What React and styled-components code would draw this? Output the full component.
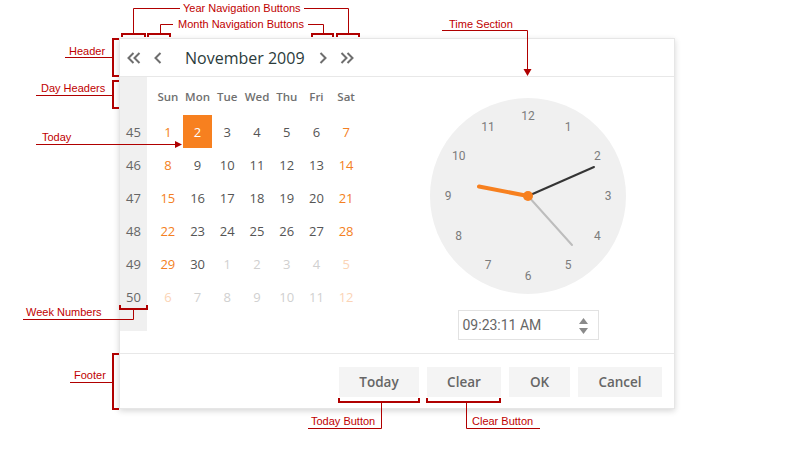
import React from "react";
import styled, { createGlobalStyle } from "styled-components";

const Global = createGlobalStyle`
  html, body { margin: 0; padding: 0; background: #ffffff; }
  body { font-family: "Open Sans", "Noto Sans", sans-serif; }
  * { box-sizing: border-box; }
`;

const Page = styled.div`
  position: relative;
  width: 794px;
  height: 450px;
  padding: 38px 0 0 119px;
  overflow: hidden;
`;

const Panel = styled.div`
  width: 556px;
  height: 371px;
  border: 1px solid #e6e6e6;
  background: #fff;
  box-shadow: 0 2px 6px rgba(0, 0, 0, 0.16);
  display: flex;
  flex-direction: column;
`;

const Header = styled.div`
  height: 38px;
  flex: none;
  border-bottom: 1px solid #e8e8e8;
  display: flex;
  align-items: center;
  padding-left: 2px;
`;

const NavButton = styled.button`
  width: 24px;
  height: 24px;
  padding: 0;
  border: 0;
  background: transparent;
  display: flex;
  align-items: center;
  justify-content: center;
  color: #6e6e6e;
`;

const Title = styled.div`
  font-family: "Open Sans", sans-serif;
  font-size: 16px;
  color: #2b3b3b;
  margin: 0 6px 0 15px;
  white-space: nowrap;
`;

const Body = styled.div`
  flex: 1;
  display: flex;
  align-items: flex-start;
`;

const WeekColumn = styled.div`
  width: 27px;
  height: 254px;
  background: #f0f0f0;
  display: flex;
  flex-direction: column;
  padding-top: 38px;
`;

const WeekNum = styled.div`
  height: 33px;
  display: flex;
  align-items: center;
  justify-content: center;
  font-size: 13px;
  color: #666;
`;

const Grid = styled.div`
  margin-left: 6px;
  width: 208px;
  display: grid;
  grid-template-columns: repeat(7, 1fr);
  grid-auto-rows: 33px;
  grid-template-rows: 38px;
`;

const DayHead = styled.div`
  display: flex;
  align-items: center;
  justify-content: center;
  font-size: 11.5px;
  font-weight: 600;
  color: #707070;
`;

const dayColor = ({ $today, $weekend, $other }) => {
  if ($today) return "#ffffff";
  if ($other) return $weekend ? "#fbd4b6" : "#d0d0d0";
  return $weekend ? "#f47f22" : "#555555";
};

const Day = styled.div`
  display: flex;
  align-items: center;
  justify-content: center;
  font-size: 13px;
  color: ${dayColor};
  background: ${({ $today }) => ($today ? "#f7801f" : "transparent")};
`;

const TimeSection = styled.div`
  flex: 1;
  display: flex;
  flex-direction: column;
  align-items: center;
  padding: 21px 0 0 21px;
`;

const TimeInput = styled.div`
  margin-top: 16px;
  width: 141px;
  height: 30px;
  border: 1px solid #e2e2e2;
  display: flex;
  align-items: center;
  justify-content: space-between;
  padding: 0 10px 0 4px;
  font-family: Roboto, sans-serif;
  font-size: 14px;
  color: #666;
`;

const Spinner = styled.div`
  display: flex;
  flex-direction: column;
  gap: 4px;
  margin-top: 1px;
`;

const Footer = styled.div`
  height: 55px;
  flex: none;
  border-top: 1px solid #e8e8e8;
  display: flex;
  justify-content: flex-end;
  align-items: flex-start;
  gap: 8px;
  padding: 13px 12px 0 0;
`;

const FooterButton = styled.button`
  width: ${({ $w }) => $w}px;
  height: 30px;
  border: 0;
  background: #f4f4f4;
  font-family: "Open Sans", sans-serif;
  font-size: 13.5px;
  font-weight: 600;
  color: #666;
  padding: 0;
`;

const Overlay = styled.svg`
  position: absolute;
  left: 0;
  top: 0;
  pointer-events: none;
`;

const Label = styled.div`
  position: absolute;
  left: ${({ $x }) => $x}px;
  top: ${({ $y }) => $y - 7}px;
  line-height: 14px;
  font-family: "Liberation Sans", Arial, sans-serif;
  font-size: 11px;
  color: #c00000;
  white-space: nowrap;
`;

const Chevron = ({ dir = "left", double }) => {
  const w = double ? 14 : 8;
  const flip = dir === "right" ? `translate(${w},0) scale(-1,1)` : undefined;
  return (
    <svg width={w} height="12" viewBox={`0 0 ${w} 12`}>
      <g transform={flip} fill="none" stroke="currentColor" strokeWidth="2">
        <path d="M6.5 1 L1.5 6 L6.5 11" />
        {double && <path d="M12.5 1 L7.5 6 L12.5 11" />}
      </g>
    </svg>
  );
};

const weeks = [45, 46, 47, 48, 49, 50];
const heads = ["Sun", "Mon", "Tue", "Wed", "Thu", "Fri", "Sat"];
const days = [];
for (let i = 0; i < 42; i++) {
  const n = i + 1;
  const other = n > 30;
  days.push({ label: other ? n - 30 : n, other, weekend: i % 7 === 0 || i % 7 === 6, today: n === 2 });
}

const Clock = () => {
  const c = 98;
  const r = 80;
  const nums = [];
  for (let h = 1; h <= 12; h++) {
    const a = (h * 30 * Math.PI) / 180;
    nums.push(
      <text
        key={h}
        x={c + r * Math.sin(a)}
        y={c - r * Math.cos(a)}
        textAnchor="middle"
        dominantBaseline="central"
        fontFamily="Roboto, sans-serif"
        fontSize="12"
        fill="#7c7c7c"
      >
        {h}
      </text>
    );
  }
  return (
    <svg width="196" height="196" viewBox="0 0 196 196">
      <circle cx={c} cy={c} r="98" fill="#f0f0f0" />
      {nums}
      <line x1={c} y1={c} x2={c + 44} y2={c + 49} stroke="#bdbdbd" strokeWidth="2" strokeLinecap="round" />
      <line x1={c} y1={c} x2={c + 66} y2={c - 29} stroke="#353535" strokeWidth="2" strokeLinecap="round" />
      <line x1={c} y1={c} x2={c - 49} y2={c - 9.5} stroke="#f7801f" strokeWidth="4" strokeLinecap="round" />
      <circle cx={c} cy={c} r="5" fill="#f7801f" />
    </svg>
  );
};

const RED = "#b00000";

const Annotations = () => (
  <>
    <Overlay width="794" height="450" viewBox="0 0 794 450">
      <g fill="none" stroke={RED} strokeWidth="1">
        <path d="M133.5 33 V8.5 H180" />
        <path d="M304 8.5 H348.5 V33" />
        <path d="M160.5 33 V24.5 H173" />
        <path d="M308 24.5 H323.5 V33" />
        <path d="M65 57.5 H113" />
        <path d="M36 95.5 H113" />
        <path d="M36 144.5 H176" />
        <path d="M23 319.5 H133.5 V309" />
        <path d="M70 382.5 H113" />
        <path d="M308 428.5 H381.5 V402" />
        <path d="M466.5 402 V428.5 H540" />
        <path d="M442 30.5 H527.5 V70" />
      </g>
      <g fill="none" stroke={RED} strokeWidth="2">
        <path d="M122 37 V34 H145 V37" />
        <path d="M337 37 V34 H359 V37" />
        <path d="M148 37 V34 H170 V37" />
        <path d="M312 37 V34 H333 V37" />
        <path d="M119 39 H113 V76 H119" />
        <path d="M119 81 H113 V108 H119" />
        <path d="M120 305 V309 H147 V305" />
        <path d="M119 354 H113 V409 H119" />
        <path d="M339 398 V402 H419 V398" />
        <path d="M427 398 V402 H500 V398" />
      </g>
      <g fill={RED}>
        <polygon points="175,141 182,144.5 175,148" />
        <polygon points="523.5,69 531.5,69 527.5,76" />
      </g>
    </Overlay>
    <Label $x={183} $y={8}>Year Navigation Buttons</Label>
    <Label $x={178} $y={24}>Month Navigation Buttons</Label>
    <Label $x={69} $y={51}>Header</Label>
    <Label $x={41} $y={88}>Day Headers</Label>
    <Label $x={42} $y={137}>Today</Label>
    <Label $x={26} $y={312}>Week Numbers</Label>
    <Label $x={74} $y={375}>Footer</Label>
    <Label $x={311} $y={421}>Today Button</Label>
    <Label $x={472} $y={421}>Clear Button</Label>
    <Label $x={449} $y={24}>Time Section</Label>
  </>
);

export default function App() {
  return (
    <>
      <Global />
      <Page>
        <Panel>
          <Header>
            <NavButton><Chevron double /></NavButton>
            <NavButton><Chevron /></NavButton>
            <Title>November 2009</Title>
            <NavButton><Chevron dir="right" /></NavButton>
            <NavButton><Chevron dir="right" double /></NavButton>
          </Header>
          <Body>
            <WeekColumn>
              {weeks.map((w) => (
                <WeekNum key={w}>{w}</WeekNum>
              ))}
            </WeekColumn>
            <Grid>
              {heads.map((h) => (
                <DayHead key={h}>{h}</DayHead>
              ))}
              {days.map((d, i) => (
                <Day key={i} $today={d.today} $weekend={d.weekend} $other={d.other}>
                  {d.label}
                </Day>
              ))}
            </Grid>
            <TimeSection>
              <Clock />
              <TimeInput>
                <span>09:23:11 AM</span>
                <Spinner>
                  <svg width="9" height="6" viewBox="0 0 9 6"><polygon points="4.5,0 9,6 0,6" fill="#8a8a8a" /></svg>
                  <svg width="9" height="6" viewBox="0 0 9 6"><polygon points="0,0 9,0 4.5,6" fill="#8a8a8a" /></svg>
                </Spinner>
              </TimeInput>
            </TimeSection>
          </Body>
          <Footer>
            <FooterButton $w={80}>Today</FooterButton>
            <FooterButton $w={74}>Clear</FooterButton>
            <FooterButton $w={61}>OK</FooterButton>
            <FooterButton $w={84}>Cancel</FooterButton>
          </Footer>
        </Panel>
        <Annotations />
      </Page>
    </>
  );
}
